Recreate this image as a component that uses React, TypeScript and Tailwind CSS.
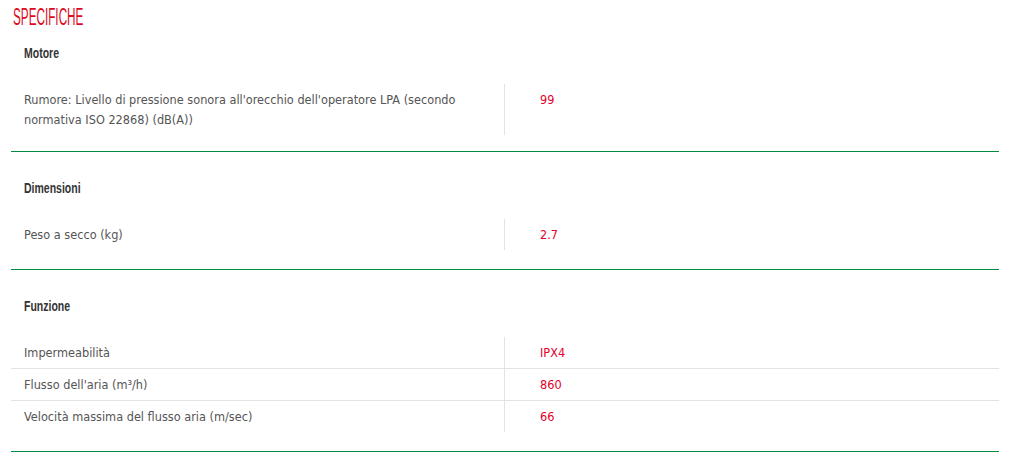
const SECTIONS = [
  {
    title: 'Motore',
    rows: [
      {
        label: "Rumore: Livello di pressione sonora all'orecchio dell'operatore LPA (secondo normativa ISO 22868) (dB(A))",
        value: '99',
      },
    ],
  },
  { title: 'Dimensioni', rows: [{ label: 'Peso a secco (kg)', value: '2.7' }] },
  {
    title: 'Funzione',
    rows: [
      { label: 'Impermeabilità', value: 'IPX4' },
      { label: "Flusso dell'aria (m³/h)", value: '860' },
      { label: 'Velocità massima del flusso aria (m/sec)', value: '66' },
    ],
  },
];

const body = { fontFamily: '"DejaVu Sans Condensed", "DejaVu Sans", sans-serif' };
const narrow = { fontFamily: '"Liberation Sans", Arial, sans-serif' };

export default function App() {
  return (
    <div className="min-h-[466px] w-[1023px] bg-white pl-[11px] pt-[5px]" style={body}>
      <div className="w-[988px]">
        <h2 className="h-[24px] pl-[2px] text-[23px] leading-[24px] text-[#dc0a1e]" style={narrow}>
          <span className="block origin-left scale-x-[0.51]">SPECIFICHE</span>
        </h2>

        {SECTIONS.map((s, i) => (
          <div key={s.title}>
            <div
              className={`${i === 0 ? 'mt-[14px]' : 'mt-[26px]'} h-[20px] pl-[13px] text-[14px] font-bold leading-[20px] text-[#333]`}
              style={narrow}
            >
              <span className="block origin-left scale-x-[0.75]">{s.title}</span>
            </div>
            <div className={`mt-[21px] ${i === 0 ? 'mb-[16px]' : 'mb-[19px]'}`}>
              {s.rows.map((r, j) => (
                <div
                  key={j}
                  className={`flex text-[12.6px] leading-[20px] ${j > 0 ? 'border-t border-[#e3e3e3]' : ''}`}
                >
                  <div className="w-[494px] border-r border-[#e3e3e3] pb-[5px] pl-[13px] pr-[30px] pt-[6px] text-[#555]">
                    {r.label}
                  </div>
                  <div className="pb-[5px] pl-[35px] pt-[6px] text-[#e4002b]">{r.value}</div>
                </div>
              ))}
            </div>
            <div className="h-px bg-[#008a43]" />
          </div>
        ))}
      </div>
    </div>
  );
}
